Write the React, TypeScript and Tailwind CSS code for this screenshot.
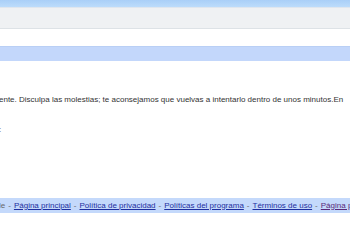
import React from 'react';

const links = ['Página principal', 'Política de privacidad', 'Políticas del programa', 'Términos de uso', 'Página principal'];

function App() {
    return (
        <div className="w-[350px] h-[250px] overflow-hidden bg-white font-['Liberation_Sans',Arial,sans-serif]">
            <div className="h-[7px] bg-gradient-to-b from-[#a9cff7] to-[#bcdcfb]" />
            <div className="h-[1px] bg-[#dfe6ee]" />
            <div className="h-[21px] bg-[#eff1f3] border-b border-[#dde2e6]" />
            <div className="h-[17px] bg-white" />
            <div className="h-[15px] bg-[#c3d7fb] border-t border-[#b9cff5]" />

            {/* mensaje de error */}
            <div className="mt-[33px] whitespace-nowrap text-[8px] leading-[12px] text-[#333] -ml-[1px]">
                ente. Disculpa las molestias; te aconsejamos que vuelvas a intentarlo dentro de unos minutos.En
            </div>
            <div className="mt-[18px] whitespace-nowrap text-[8px] leading-[12px] text-[#555] -ml-[1px]">
                :
            </div>

            <div className="mt-[62px] h-[15px] bg-[#c4d9fb] flex items-center whitespace-nowrap text-[8px] text-[#666] -ml-[1px]">
                <span>le</span>
                {links.map((l, i) => (
                    <React.Fragment key={i}>
                        <span className="px-[3px]">-</span>
                        <a href="#" className={i === 4 ? 'text-[#5a2a7a] underline' : 'text-[#1e2fa0] underline'}>{l}</a>
                    </React.Fragment>
                ))}
            </div>
        </div>
    );
}

export default App;
